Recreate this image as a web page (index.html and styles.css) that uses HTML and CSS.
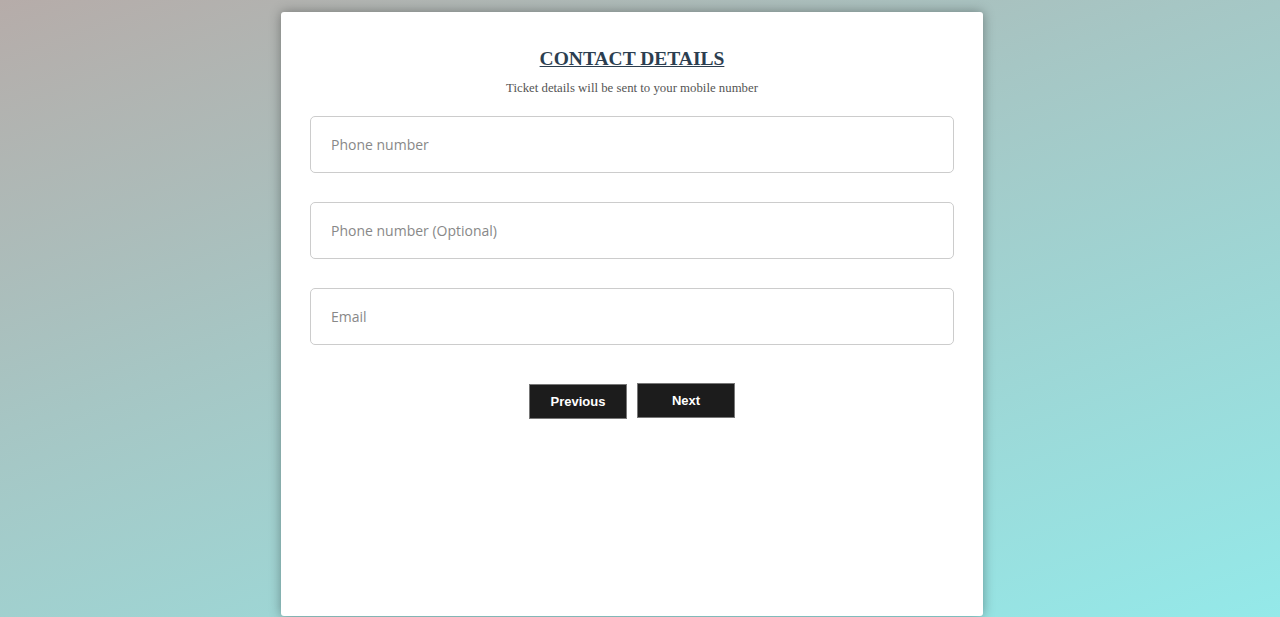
FILE: index.html
```html
<!DOCTYPE html>
<html>
<head>
<meta charset="utf-8">
<link rel="stylesheet" href="styles.css">
</head>
<body>
<div class="page">
  <div class="card">
    <h1 class="title">CONTACT DETAILS</h1>
    <p class="subtitle">Ticket details will be sent to your mobile number</p>
    <form class="form">
      <input class="field" type="text" placeholder="Phone number">
      <input class="field" type="text" placeholder="Phone number (Optional)">
      <input class="field" type="text" placeholder="Email">
      <div class="actions">
        <button type="button" class="btn btn-prev">Previous</button>
        <button type="button" class="btn btn-next">Next</button>
      </div>
    </form>
  </div>
</div>
</body>
</html>
```
FILE: styles.css
```css
html, body {
  margin: 0;
  height: 100%;
}
body {
  background: linear-gradient(160deg, #b6aca9 0%, #a6c6c4 40%, #94e9e9 100%);
  overflow: hidden;
}
.page {
  display: flex;
  justify-content: center;
  padding: 12px 16px 1px 0;
  height: 100%;
  box-sizing: border-box;
}
.card {
  width: 702px;
  background: #fff;
  border-radius: 3px;
  box-shadow: 0 0 12px rgba(0, 0, 0, 0.35);
  padding: 36px 29px 0;
  box-sizing: border-box;
  text-align: center;
}
.title {
  margin: 0;
  font-family: "Liberation Serif", "Times New Roman", serif;
  font-size: 19.5px;
  font-weight: bold;
  color: #2c3e50;
  text-decoration: underline;
  line-height: 22px;
}
.subtitle {
  margin: 10px 0 20px;
  font-family: "Liberation Serif", "Times New Roman", serif;
  font-size: 12.8px;
  color: #555;
  line-height: 16px;
}
.form {
  display: flex;
  flex-direction: column;
  gap: 29px;
}
.field {
  height: 57px;
  box-sizing: border-box;
  border: 1px solid #ccc;
  border-radius: 5px;
  padding: 0 20px;
  font-family: "Open Sans", "Noto Sans", sans-serif;
  font-size: 14px;
  color: #333;
  outline: none;
}
.field::placeholder {
  color: #888;
}
.actions {
  display: flex;
  justify-content: center;
  align-items: flex-start;
  gap: 10px;
  margin-top: 9px;
}
.btn {
  width: 98px;
  height: 35px;
  background: #1c1c1c;
  color: #fff;
  border: 1px solid #777;
  font-family: "Liberation Sans", Arial, sans-serif;
  font-weight: bold;
  font-size: 13px;
  padding: 0;
  cursor: pointer;
}
.btn-prev {
  margin-top: 1px;
}
```
